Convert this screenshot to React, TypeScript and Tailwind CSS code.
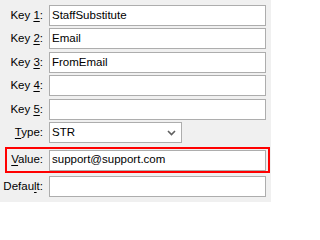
function Label({ pre, key1, post }: { pre: string; key1: string; post: string }) {
  return (
    <span className="w-[44px] shrink-0 text-right pr-[1px] text-black">
      {pre}
      <span className="underline underline-offset-[2px] decoration-1">{key1}</span>
      {post}
    </span>
  );
}

function Row({ label, value, mt }: { label: [string, string, string]; value?: string; mt: string }) {
  return (
    <div className={`flex items-center ${mt}`}>
      <Label pre={label[0]} key1={label[1]} post={label[2]} />
      <div className="h-[21px] w-[217px] ml-[5px] border border-[#adadad] bg-white flex items-center px-[2px]">
        {value}
      </div>
    </div>
  );
}

export default function App() {
  return (
    <div className="w-[271px] h-[202px] bg-[#f0f0f0] font-['Liberation_Sans',sans-serif] text-[11.5px] text-black leading-none overflow-hidden pt-[5px]">
      <Row label={["Key ", "1", ":"]} value="StaffSubstitute" mt="mt-0" />
      <Row label={["Key ", "2", ":"]} value="Email" mt="mt-[2px]" />
      <Row label={["Key ", "3", ":"]} value="FromEmail" mt="mt-[3px]" />
      <Row label={["Key ", "4", ":"]} mt="mt-[2px]" />
      <Row label={["Key ", "5", ":"]} mt="mt-[3px]" />
      <div className="flex items-center mt-[2px]">
        <Label pre="" key1="T" post="ype:" />
        <div className="h-[21px] w-[133px] ml-[5px] border border-[#adadad] bg-white flex items-center justify-between pl-[2px] pr-[5px]">
          <span>STR</span>
          <svg width="9" height="6" viewBox="0 0 9 6" className="mt-[1px]">
            <path d="M1 1 L4.5 4.5 L8 1" fill="none" stroke="#606060" strokeWidth="1.6" />
          </svg>
        </div>
      </div>
      <div className="ml-[5px] mt-[4px] w-[265px] h-[26px] border-2 border-[#ff0000] flex items-center">
        <div className="flex items-center -ml-[7px]">
          <Label pre="" key1="V" post="alue:" />
          <div className="h-[21px] w-[217px] ml-[5px] border border-[#adadad] bg-white flex items-center px-[2px]">
            support@support.com
          </div>
        </div>
      </div>
      <Row label={["Defau", "l", "t:"]} mt="mt-[3px]" />
    </div>
  );
}
